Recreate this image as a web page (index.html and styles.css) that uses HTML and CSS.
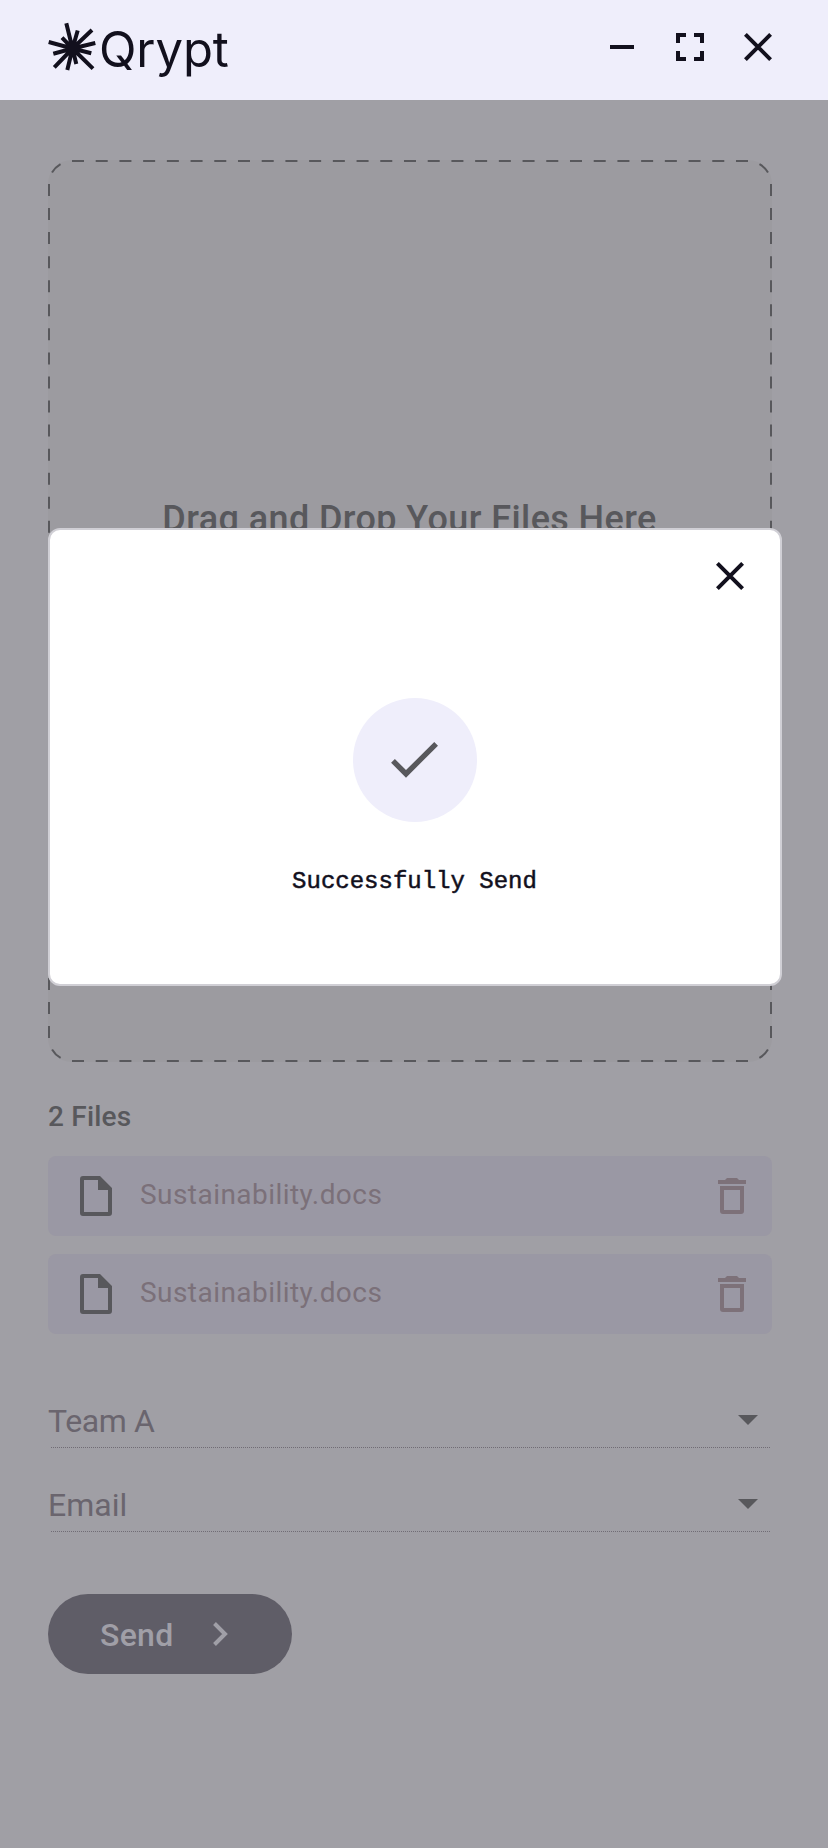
FILE: index.html
```html
<!DOCTYPE html>
<html lang="en">
<head>
<meta charset="utf-8">
<title>Qrypt</title>
<link rel="stylesheet" href="styles.css">
</head>
<body>
<header class="titlebar">
  <div class="brand">
    <svg class="burst" width="48" height="50" viewBox="48 22 48 50" fill="none" stroke="currentColor" stroke-width="4">
      <path d="M72.5 48.5L66.3 23.3M72.5 48.5L77.7 30.5M72.5 48.5L92 30M72.5 48.5L95.3 43M72.5 48.5L91.3 53.3M72.5 48.5L93 68.7M72.5 48.5L76.3 64M72.5 48.5L67.3 70M72.5 48.5L54.3 67.3M72.5 48.5L53.3 53.7M72.5 48.5L48.7 42M72.5 48.5L62 37.7"/>
    </svg>
    <span class="wordmark">Qrypt</span>
  </div>
  <div class="controls">
    <svg width="28" height="28" viewBox="0 0 28 28"><path d="M2 12h24v4H2z" fill="currentColor"/></svg>
    <svg width="28" height="28" viewBox="0 0 28 28" fill="none" stroke="currentColor" stroke-width="4"><path d="M2 10V2h8M18 2h8v8M26 18v8h-8M10 26H2v-8"/></svg>
    <svg width="28" height="28" viewBox="0 0 28 28" fill="none" stroke="currentColor" stroke-width="4"><path d="M1.4 1.4l25.2 25.2M26.6 1.4L1.4 26.6"/></svg>
  </div>
</header>
<main class="page">
  <section class="dropzone">
    <svg class="outline" width="724" height="902" viewBox="0 0 724 902" fill="none" stroke="currentColor" stroke-width="2">
      <path d="M24 1H700M24 901H700" stroke-dasharray="12 11.714"/>
      <path d="M1 24V878M723 24V878" stroke-dasharray="12 12.057"/>
      <path d="M24 1A23 23 0 0 0 1 24M700 1A23 23 0 0 1 723 24M1 878A23 23 0 0 0 24 901M723 878A23 23 0 0 1 700 901" stroke-dasharray="0 12 12 13"/>
    </svg>
    <h1 class="prompt">Drag and Drop Your Files Here</h1>
  </section>
  <h2 class="count">2 Files</h2>
  <ul class="files">
    <li class="file">
      <svg class="doc" width="32" height="40" viewBox="0 0 32 40"><path fill="currentColor" fill-rule="evenodd" d="M3 0h17l12 12v25a3 3 0 0 1-3 3H3a3 3 0 0 1-3-3V3a3 3 0 0 1 3-3zM4 4v32h24V14H18V4z"/></svg>
      <span class="name">Sustainability.docs</span>
      <svg class="trash" width="28" height="36" viewBox="0 0 28 36"><path fill="currentColor" fill-rule="evenodd" d="M0 2h7l2-2h10l2 2h7v4H0zM2 8h24v25a3 3 0 0 1-3 3H5a3 3 0 0 1-3-3zM6 12v20h16V12z"/></svg>
    </li>
    <li class="file">
      <svg class="doc" width="32" height="40" viewBox="0 0 32 40"><path fill="currentColor" fill-rule="evenodd" d="M3 0h17l12 12v25a3 3 0 0 1-3 3H3a3 3 0 0 1-3-3V3a3 3 0 0 1 3-3zM4 4v32h24V14H18V4z"/></svg>
      <span class="name">Sustainability.docs</span>
      <svg class="trash" width="28" height="36" viewBox="0 0 28 36"><path fill="currentColor" fill-rule="evenodd" d="M0 2h7l2-2h10l2 2h7v4H0zM2 8h24v25a3 3 0 0 1-3 3H5a3 3 0 0 1-3-3zM6 12v20h16V12z"/></svg>
    </li>
  </ul>
  <div class="fields">
    <div class="field"><span class="team">Team A</span><svg width="20" height="10" viewBox="0 0 20 10"><path d="M0 0h20L10 10z" fill="currentColor"/></svg></div>
    <div class="field"><span class="email">Email</span><svg width="20" height="10" viewBox="0 0 20 10"><path d="M0 0h20L10 10z" fill="currentColor"/></svg></div>
  </div>
  <button class="send"><span>Send</span><svg width="15" height="24" viewBox="0 0 15 24" fill="none" stroke="currentColor" stroke-width="4"><path d="M1.5 1.5L12 12 1.5 22.5"/></svg></button>
</main>
<div class="dialog" role="dialog">
  <svg class="close" width="28" height="28" viewBox="0 0 28 28" fill="none" stroke="currentColor" stroke-width="4"><path d="M1.4 1.4l25.2 25.2M26.6 1.4L1.4 26.6"/></svg>
  <div class="badge"><svg width="64" height="64" viewBox="0 0 24 24"><path fill="currentColor" d="M9 16.17L4.83 12l-1.42 1.41L9 19 21 7l-1.41-1.41z"/></svg></div>
  <p class="message">Successfully Send</p>
</div>
</body>
</html>
```
FILE: styles.css
```css
* { box-sizing: border-box; }
body {
  margin: 0;
  position: relative;
  height: 1848px;
  overflow: hidden;
  background: #a09fa5;
  font-family: Roboto, "Liberation Sans", sans-serif;
  color: #58585c;
}
svg { display: block; flex: none; }
.titlebar {
  display: flex;
  justify-content: space-between;
  height: 100px;
  padding: 0 56px 0 48px;
  background: #efeefb;
  color: #12101d;
}
.brand { display: flex; }
.burst { margin-top: 22px; }
.wordmark {
  margin: 20px 0 0 3px;
  font: 400 49px/60px Inter, sans-serif;
  letter-spacing: -0.1px;
}
.controls { display: flex; gap: 40px; padding-top: 33px; }
.page { padding: 60px 56px 0 48px; }
.dropzone {
  display: grid;
  height: 902px;
  border-radius: 24px;
  background: #9c9ba0;
}
.outline, .prompt { grid-area: 1 / 1; }
.prompt {
  margin: 335px 0 0;
  padding-right: 1px;
  text-align: center;
  font-size: 36px;
  line-height: 48px;
  font-weight: 500;
  letter-spacing: 0.4px;
  white-space: nowrap;
}
.count {
  margin: 37px 0 0;
  font-size: 28px;
  line-height: 36px;
  font-weight: 500;
  letter-spacing: 0.2px;
}
.files { display: grid; gap: 18px; margin: 21px 0 0; padding: 0; list-style: none; }
.file {
  display: flex;
  align-items: center;
  height: 80px;
  padding: 0 26px 0 32px;
  border-radius: 8px;
  background: #9a98a4;
}
.name {
  flex: 1;
  margin: -2px 0 0 28px;
  font-size: 28px;
  line-height: 36px;
  color: #7b7079;
  letter-spacing: 0.45px;
}
.trash { color: #7d7179; }
.fields { padding-top: 66px; }
.field {
  display: flex;
  align-items: center;
  justify-content: space-between;
  height: 48px;
  padding: 0 14px 8px 0;
  margin-bottom: 36px;
  font-size: 32px;
  line-height: 40px;
  font-weight: 400;
  color: #6a656e;
  background: repeating-linear-gradient(90deg, #706c75 0 1px, transparent 1px 2px) 3px 100% / 719px 1px no-repeat;
}
.field span { padding-top: 2px; }
.team { letter-spacing: -0.4px; }
.field svg { color: #58585c; }
.send {
  display: flex;
  align-items: center;
  width: 244px;
  height: 80px;
  margin: 62px 0 0;
  padding: 0 0 0 52px;
  border: 0;
  border-radius: 40px;
  background: #5f5d67;
  color: #a09fa7;
  font: 500 32px/40px Roboto, sans-serif;
  letter-spacing: 0.3px;
}
.send span { width: 113px; padding-top: 2px; text-align: left; }
.dialog {
  position: absolute;
  left: 48px;
  top: 528px;
  width: 734px;
  height: 458px;
  display: flex;
  flex-direction: column;
  align-items: center;
  border: 2px solid #d0cfd5;
  border-radius: 12px;
  background: #fff;
  color: #12101d;
}
.close { align-self: flex-end; margin: 32px 36px 0 0; }
.badge {
  display: grid;
  place-items: center;
  width: 124px;
  height: 124px;
  margin-top: 108px;
  border-radius: 50%;
  background: #efeefb;
  color: #58585c;
}
.badge svg { margin: -2px 0 0 -2px; }
.message {
  margin: 44px 0 0 -1px;
  font: 400 24px/32px "Liberation Mono", monospace;
  -webkit-text-stroke: 0.5px currentColor;
}
```
